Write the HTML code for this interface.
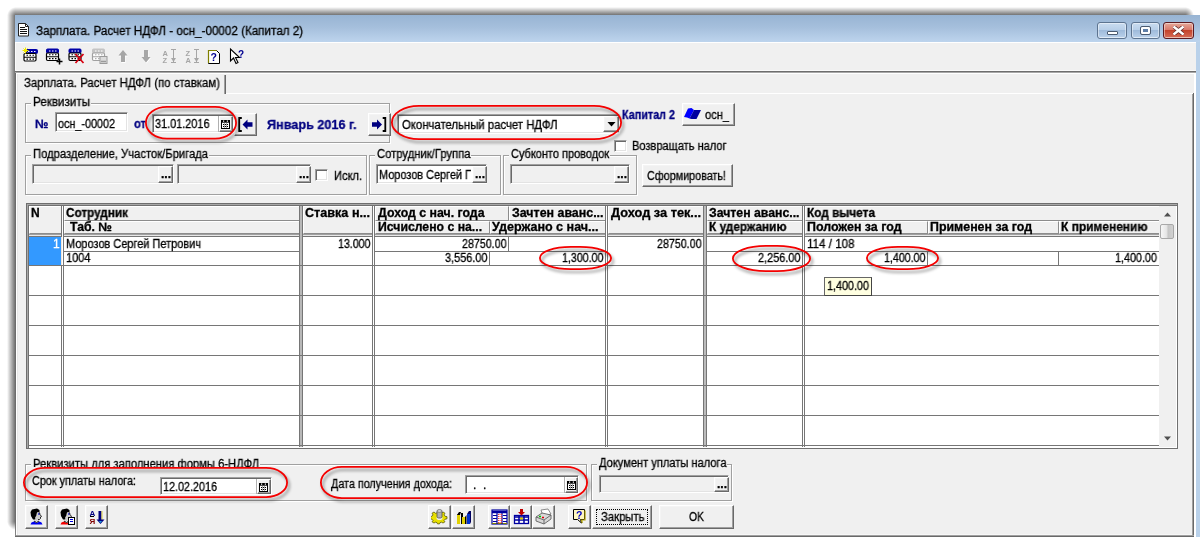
<!DOCTYPE html>
<html lang="ru"><head><meta charset="utf-8"><title>Зарплата. Расчет НДФЛ</title>
<style>
html,body{margin:0;padding:0}
body{width:1200px;height:537px;overflow:hidden;background:#fff;position:relative;font-family:"Liberation Sans", sans-serif;font-size:11px;color:#000}
div,span,svg{position:absolute}
svg{will-change:transform}
span{white-space:pre;line-height:1;transform-origin:0 0;will-change:transform;-webkit-text-stroke:0.3px}
</style></head>
<body>
<div style="left:7px;top:16px;width:9px;height:505px;background:linear-gradient(90deg,rgba(0,0,0,0),rgba(0,0,0,0.62))"></div>
<div style="left:16px;top:7px;width:1169px;height:9px;background:linear-gradient(180deg,rgba(0,0,0,0),rgba(0,0,0,0.62))"></div>
<div style="left:7px;top:7px;width:9px;height:9px;background:radial-gradient(circle at 100% 100%,rgba(0,0,0,0.62),rgba(0,0,0,0) 9px)"></div>
<div style="left:1185px;top:7px;width:9px;height:9px;background:radial-gradient(circle at 0 100%,rgba(0,0,0,0.62),rgba(0,0,0,0) 9px)"></div>
<div style="left:7px;top:521px;width:9px;height:9px;background:radial-gradient(circle at 100% 0,rgba(0,0,0,0.62),rgba(0,0,0,0) 9px)"></div>
<div style="left:15px;top:15px;width:1185px;height:522px;background:#f0f0f0"></div>
<div style="left:15px;top:15px;width:1185px;height:27px;background:linear-gradient(#98b4d3,#a5bfdc 45%,#bdd4ed)"></div>
<div style="left:1196px;top:42px;width:4px;height:495px;background:#b9d1ea"></div>
<div style="left:15px;top:42px;width:1181px;height:1px;background:#fff"></div>
<div style="left:15px;top:43px;width:1px;height:28px;background:#fbfbfb"></div>
<div style="left:15px;top:73px;width:1px;height:448px;background:#6c6c6c"></div>
<div style="left:15px;top:521px;width:1px;height:16px;background:linear-gradient(#6c6c6c,#8a8a8a)"></div>
<svg style="left:18px;top:23px" width="12" height="14" viewBox="0 0 12 14"><path d="M0.5 0.5h7l3 3v9.5h-10z" fill="#fff" stroke="#222" stroke-width="1"/><path d="M7.5 0.5v3h3" fill="none" stroke="#222" stroke-width="1"/><path d="M2 4.5h5M2 6.5h7M2 8.5h7M2 10.5h7" stroke="#111" stroke-width="1"/></svg>
<span id="t0" style="left:35.50px;top:25.19px;font-size:12px;color:#000;transform:scaleX(0.971);">Зарплата. Расчет НДФЛ - осн_-00002 (Капитал 2)</span>
<div style="left:1097px;top:22px;width:30px;height:17px;box-sizing:border-box;border:1px solid #5d7490;border-radius:3px;background:linear-gradient(#c9dcf0,#b8cfe8 45%,#9fbbdb 50%,#b5cde8 90%,#cfe0f3);box-shadow:inset 0 0 0 1px rgba(255,255,255,.45)"></div>
<div style="left:1131px;top:22px;width:29px;height:17px;box-sizing:border-box;border:1px solid #5d7490;border-radius:3px;background:linear-gradient(#c9dcf0,#b8cfe8 45%,#9fbbdb 50%,#b5cde8 90%,#cfe0f3);box-shadow:inset 0 0 0 1px rgba(255,255,255,.45)"></div>
<div style="left:1163px;top:22px;width:31px;height:17px;box-sizing:border-box;border:1px solid #5c1a20;border-radius:3px;background:linear-gradient(#e5a99a,#d9796a 45%,#c4432b 50%,#d2644f 90%,#e09a80);box-shadow:inset 0 0 0 1px rgba(255,255,255,.45)"></div>
<div style="left:1107px;top:31px;width:11px;height:4px;box-sizing:border-box;background:#fff;border:1px solid #4a5a70;border-radius:1px"></div>
<div style="left:1141px;top:27px;width:9px;height:7px;box-sizing:border-box;background:#5f7fa8;border:2px solid #fff;outline:1px solid #4a5a70;border-radius:1px"></div>
<svg style="left:1173px;top:26px" width="11" height="9" viewBox="0 0 13 11"><path d="M1.5 1.5l10 8M11.5 1.5l-10 8" stroke="#5a2a2a" stroke-width="4.800" stroke-linecap="square"/><path d="M1.500 1.500l10 8M11.500 1.500l-10 8" stroke="#fff" stroke-width="3" stroke-linecap="square"/></svg>
<div style="left:15px;top:70px;width:1181px;height:1px;background:#fafafa"></div>
<div style="left:15px;top:71px;width:1181px;height:1px;background:#6e6e6e"></div>
<div style="left:15px;top:72px;width:1181px;height:1px;background:#a8a8a8"></div>
<div style="left:16px;top:73px;width:1178px;height:1px;background:#fff"></div>
<svg style="left:21px;top:46px" width="20" height="20" viewBox="0 0 20 20"><rect x="4.5" y="3.5" width="12" height="4" rx="1" fill="#0000a8" stroke="#0000a8" stroke-width="1"/><rect x="3" y="7.5" width="12" height="7.500" rx="1.200" fill="#fff" stroke="#000" stroke-width="1.200"/><path d="M3 11.25h12" stroke="#000" stroke-width="1"/><path d="M7.0 5.5h1.500M10.0 5.5h1.500M13.0 5.5h1.500" stroke="#fff" stroke-width="1.100"/><path d="M5.5 9.3h1.500M8.5 9.3h1.500M11.5 9.3h1.500" stroke="#000" stroke-width="1.100"/><path d="M5.5 13.1h1.500M8.5 13.1h1.500M11.5 13.1h1.500" stroke="#000" stroke-width="1.100"/><path d="M4.500 1.500v6M1.500 4.500h6M2.500 2.500l4 4M6.500 2.500l-4 4" stroke="#f0e800" stroke-width="1"/></svg>
<svg style="left:44px;top:46px" width="20" height="20" viewBox="0 0 20 20"><rect x="2.5" y="3" width="12" height="4" rx="1" fill="#0000a8" stroke="#0000a8" stroke-width="1"/><rect x="2.5" y="7" width="12" height="7.500" rx="1.200" fill="#fff" stroke="#000" stroke-width="1.200"/><path d="M2.5 10.75h12" stroke="#000" stroke-width="1"/><path d="M5.0 5.0h1.500M8.0 5.0h1.500M11.0 5.0h1.500" stroke="#fff" stroke-width="1.100"/><path d="M5.0 8.8h1.500M8.0 8.8h1.500M11.0 8.8h1.500" stroke="#000" stroke-width="1.100"/><path d="M5.0 12.6h1.500M8.0 12.6h1.500M11.0 12.6h1.500" stroke="#000" stroke-width="1.100"/><path d="M15.500 12.500v6M12.500 15.500h6" stroke="#000" stroke-width="1.500"/></svg>
<svg style="left:67px;top:46px" width="20" height="20" viewBox="0 0 20 20"><rect x="2" y="3" width="12" height="4" rx="1" fill="#0000a8" stroke="#0000a8" stroke-width="1"/><rect x="2" y="7" width="12" height="7.500" rx="1.200" fill="#fff" stroke="#000" stroke-width="1.200"/><path d="M2 10.75h12" stroke="#000" stroke-width="1"/><path d="M4.5 5.0h1.500M7.5 5.0h1.500M10.5 5.0h1.500" stroke="#fff" stroke-width="1.100"/><path d="M4.5 8.8h1.500M7.5 8.8h1.500M10.5 8.8h1.500" stroke="#000" stroke-width="1.100"/><path d="M4.5 12.6h1.500M7.5 12.6h1.500M10.5 12.6h1.500" stroke="#000" stroke-width="1.100"/><path d="M8.500 8l8 9M16.500 8l-8 9" stroke="#d80010" stroke-width="1.700"/></svg>
<svg style="left:90px;top:46px" width="20" height="20" viewBox="0 0 20 20"><rect x="2.5" y="3" width="12" height="4" rx="1" fill="#c4c4c4" stroke="#c4c4c4" stroke-width="1"/><rect x="2.5" y="7" width="12" height="7.500" rx="1.200" fill="#fff" stroke="#a0a0a0" stroke-width="1.200"/><path d="M2.5 10.75h12" stroke="#a0a0a0" stroke-width="1"/><path d="M5.0 5.0h1.500M8.0 5.0h1.500M11.0 5.0h1.500" stroke="#fff" stroke-width="1.100"/><path d="M5.0 8.8h1.500M8.0 8.8h1.500M11.0 8.8h1.500" stroke="#b0b0b0" stroke-width="1.100"/><path d="M5.0 12.6h1.500M8.0 12.6h1.500M11.0 12.6h1.500" stroke="#b0b0b0" stroke-width="1.100"/><rect x="10" y="10.500" width="7" height="7" fill="#dcdcdc" stroke="#9a9a9a"/><path d="M11 15.500h5" stroke="#9a9a9a" stroke-width="1.500"/></svg>
<svg style="left:113px;top:46px" width="20" height="20" viewBox="0 0 20 20"><path d="M10.500 5l4.500 5.500h-2.500v6.500h-4v-6.500h-2.500z" fill="#fff"/><path d="M10 4l4.500 5.500h-2.500v6.500h-4v-6.500h-2.500z" fill="#a6a6a6"/></svg>
<svg style="left:136px;top:46px" width="20" height="20" viewBox="0 0 20 20"><path d="M10.500 17.500l4.500-5.500h-2.500v-7h-4v7h-2.500z" fill="#fff"/><path d="M10 16.500l4.500-5.500h-2.500v-7h-4v7h-2.500z" fill="#a6a6a6"/></svg>
<svg style="left:159px;top:46px" width="20" height="20" viewBox="0 0 20 20"><text x="3.500" y="9.500" font-size="7.500" font-weight="bold" font-family="Liberation Sans, sans-serif" fill="#a6a6a6">A</text><text x="3.500" y="17" font-size="7.500" font-weight="bold" font-family="Liberation Sans, sans-serif" fill="#a6a6a6">Z</text><path d="M14.500 3.500v13M12 3.500h5M12 16.500h5" stroke="#a6a6a6" fill="none"/><path d="M12 12h5l-2.500 4z" fill="#a6a6a6"/></svg>
<svg style="left:182px;top:46px" width="20" height="20" viewBox="0 0 20 20"><text x="3.500" y="9.500" font-size="7.500" font-weight="bold" font-family="Liberation Sans, sans-serif" fill="#a6a6a6">Z</text><text x="3.500" y="17" font-size="7.500" font-weight="bold" font-family="Liberation Sans, sans-serif" fill="#a6a6a6">A</text><path d="M14.500 3.500v13M12 3.500h5M12 16.500h5" stroke="#a6a6a6" fill="none"/><path d="M12 12h5l-2.500 4z" fill="#a6a6a6"/></svg>
<svg style="left:205px;top:46px" width="20" height="20" viewBox="0 0 20 20"><path d="M3.500 17.500v-13h8l3 3v10z" fill="#fff" stroke="#000"/><path d="M3.500 17v-12.500h8" fill="none" stroke="#808000" stroke-width="1.200"/><text x="5.500" y="15" font-size="10.500" font-weight="bold" font-family="Liberation Sans, sans-serif" fill="#000090">?</text></svg>
<svg style="left:228px;top:46px" width="20" height="20" viewBox="0 0 20 20"><path d="M2.500 3v12l3-3l2.500 5.500l2-1l-2.500-5h4z" fill="#fff" stroke="#000" stroke-width="1.100"/><text x="10" y="12" font-size="10" font-weight="bold" font-family="Liberation Sans, sans-serif" fill="#000090">?</text></svg>
<div style="left:226px;top:93px;width:967px;height:1px;background:#fff"></div>
<div style="left:16px;top:73px;width:1px;height:463px;background:#fff"></div>
<div style="left:17px;top:74px;width:1px;height:461px;background:#e6e6e6"></div>
<div style="left:1192px;top:94px;width:1px;height:442px;background:#a0a0a0"></div>
<div style="left:1193px;top:93px;width:1px;height:444px;background:#696969"></div>
<div style="left:1194px;top:73px;width:1px;height:464px;background:#fff"></div>
<div style="left:1195px;top:73px;width:1px;height:464px;background:#fff"></div>
<div style="left:18px;top:534px;width:1174px;height:1px;background:#f7f7f7"></div>
<div style="left:16px;top:535px;width:1178px;height:1px;background:#a0a0a0"></div>
<div style="left:15px;top:536px;width:1179px;height:1px;background:#696969"></div>
<div style="left:224px;top:75px;width:1px;height:19px;background:#a0a0a0"></div>
<div style="left:225px;top:75px;width:1px;height:19px;background:#696969"></div>
<span id="t1" style="left:23.50px;top:77.19px;font-size:12px;color:#000;transform:scaleX(0.949);">Зарплата. Расчет НДФЛ (по ставкам)</span>
<div style="left:25px;top:103px;width:365px;height:40px;box-sizing:border-box;border:1px solid #a0a0a0;box-shadow:1px 1px 0 #fff, inset 1px 1px 0 #fff"></div>
<div style="left:31px;top:97px;width:60px;height:12px;background:#f0f0f0"></div>
<span id="t2" style="left:32.50px;top:96.19px;font-size:12px;color:#000;transform:scaleX(0.969);">Реквизиты</span>
<span id="t3" style="left:34.50px;top:118.19px;font-size:12px;color:#000080;font-weight:bold;">№</span>
<div style="left:55px;top:112px;width:73px;height:20px;background:#fff;box-sizing:border-box;border:1px solid;border-color:#a0a0a0 #fff #fff #a0a0a0;box-shadow:inset 1px 1px 0 #696969, inset -1px -1px 0 #e3e3e3"></div>
<span id="t4" style="left:57.50px;top:117.69px;font-size:12px;color:#000;transform:scaleX(0.900);">осн_-00002</span>
<span id="t5" style="left:133.50px;top:118.19px;font-size:12px;color:#000080;font-weight:bold;transform:scaleX(0.929);">от</span>
<div style="left:152px;top:114px;width:82px;height:19px;background:#fff;box-sizing:border-box;border:1px solid;border-color:#a0a0a0 #fff #fff #a0a0a0;box-shadow:inset 1px 1px 0 #696969, inset -1px -1px 0 #e3e3e3"></div>
<div style="left:218px;top:116px;width:1px;height:16px;background:#b0b0b0"></div>
<div style="left:219px;top:116px;width:14px;height:16px;background:#f0f0f0;box-sizing:border-box;border:1px solid;border-color:#fff #696969 #696969 #fff;box-shadow:inset -1px -1px 0 #a0a0a0, inset 1px 1px 0 #f4f4f4"></div>
<svg style="left:221px;top:120px" width="9" height="9" viewBox="0 0 9 9"><rect x="0.500" y="0.500" width="8" height="8" fill="#fff" stroke="#000"/><path d="M0 1.500h9" stroke="#000" stroke-width="2.400"/><path d="M2 0.600h1.200v1.200h-1.200zM5.800 0.600h1.200v1.200h-1.200z" fill="#fff"/><path d="M2 4.500h1M4 4.500h1M6 4.500h1M2 6.500h1M4 6.500h1M6 6.500h1" stroke="#000" stroke-width="1"/><path d="M3.500 3v5M5.500 3v5" stroke="#777" stroke-width="0.600"/></svg>
<span id="t6" style="left:154.50px;top:117.69px;font-size:12px;color:#000;transform:scaleX(0.907);">31.01.2016</span>
<div style="left:234px;top:113px;width:23px;height:23px;background:#f0f0f0;box-sizing:border-box;border:1px solid;border-color:#fff #696969 #696969 #fff;box-shadow:inset -1px -1px 0 #a0a0a0, inset 1px 1px 0 #f4f4f4"></div>
<svg style="left:238px;top:117px" width="16" height="15" viewBox="0 0 16 15"><path d="M3.800 1h-2.600v13h2.600" fill="none" stroke="#000" stroke-width="1.800"/><path d="M4.500 7.500L9.500 2.500V5.200H14.500V9.800H9.500V12.500Z" fill="#000080"/></svg>
<span id="t7" style="left:266.50px;top:117.95px;font-size:13px;color:#000080;font-weight:bold;transform:scaleX(0.972);">Январь 2016 г.</span>
<div style="left:368px;top:113px;width:23px;height:23px;background:#f0f0f0;box-sizing:border-box;border:1px solid;border-color:#fff #696969 #696969 #fff;box-shadow:inset -1px -1px 0 #a0a0a0, inset 1px 1px 0 #f4f4f4"></div>
<svg style="left:370px;top:117px" width="17" height="15" viewBox="0 0 17 15"><path d="M12.700 1h2.600v13h-2.600" fill="none" stroke="#000" stroke-width="1.800"/><path d="M12 7.500L7 2.500V5.200H2V9.800H7V12.500Z" fill="#000080"/></svg>
<div style="left:397px;top:114px;width:223px;height:20px;background:#fff;box-sizing:border-box;border:1px solid;border-color:#a0a0a0 #fff #fff #a0a0a0;box-shadow:inset 1px 1px 0 #696969, inset -1px -1px 0 #e3e3e3"></div>
<div style="left:603px;top:116px;width:16px;height:16px;background:#f0f0f0;box-sizing:border-box;border:1px solid;border-color:#fff #696969 #696969 #fff;box-shadow:inset -1px -1px 0 #a0a0a0, inset 1px 1px 0 #f4f4f4"></div>
<svg style="left:607px;top:122px" width="9" height="5" viewBox="0 0 9 5"><path d="M0.500 0h8l-4 4.500z" fill="#000"/></svg>
<span id="t8" style="left:402.00px;top:118.69px;font-size:12px;color:#000;transform:scaleX(0.945);">Окончательный расчет НДФЛ</span>
<span id="t9" style="left:621.50px;top:108.69px;font-size:12px;color:#000080;font-weight:bold;transform:scaleX(0.899);">Капитал 2</span>
<div style="left:682px;top:103px;width:53px;height:23px;background:#f0f0f0;box-sizing:border-box;border:1px solid;border-color:#fff #696969 #696969 #fff;box-shadow:inset -1px -1px 0 #a0a0a0, inset 1px 1px 0 #f4f4f4"></div>
<svg style="left:683px;top:106px" width="19" height="14" viewBox="0 0 19 14"><path d="M1 11L5 2.500L8.500 2L11 4L6.500 12.500L4 11.500Z" fill="#0000ff"/><path d="M6.500 12.500L11 4L18 4L13.500 13L8.500 13Z" fill="#0000a0"/></svg>
<span id="t10" style="left:705.00px;top:108.69px;font-size:12px;color:#000;transform:scaleX(0.924);">осн_</span>
<div style="left:614px;top:140px;width:13px;height:12px;background:#fff;box-sizing:border-box;border:1px solid;border-color:#a0a0a0 #fff #fff #a0a0a0;box-shadow:inset 1px 1px 0 #696969, inset -1px -1px 0 #e3e3e3"></div>
<span id="t11" style="left:632.00px;top:140.19px;font-size:12px;color:#000;transform:scaleX(0.921);">Возвращать налог</span>
<div style="left:25px;top:155px;width:342px;height:40px;box-sizing:border-box;border:1px solid #a0a0a0;box-shadow:1px 1px 0 #fff, inset 1px 1px 0 #fff"></div>
<div style="left:31px;top:149px;width:178px;height:12px;background:#f0f0f0"></div>
<span id="t12" style="left:32.50px;top:148.19px;font-size:12px;color:#000;transform:scaleX(0.936);">Подразделение, Участок/Бригада</span>
<div style="left:32px;top:164px;width:142px;height:20px;background:#f0f0f0;box-sizing:border-box;border:1px solid;border-color:#a0a0a0 #fff #fff #a0a0a0;box-shadow:inset 1px 1px 0 #696969, inset -1px -1px 0 #e3e3e3"></div>
<div style="left:158px;top:166px;width:15px;height:17px;background:#f0f0f0;box-sizing:border-box;border:1px solid;border-color:#fff #696969 #696969 #fff;box-shadow:inset -1px -1px 0 #a0a0a0, inset 1px 1px 0 #f4f4f4"></div>
<span id="t13" style="left:161.00px;top:168.19px;font-size:12px;color:#000;font-weight:bold;">...</span>
<div style="left:177px;top:164px;width:134px;height:20px;background:#f0f0f0;box-sizing:border-box;border:1px solid;border-color:#a0a0a0 #fff #fff #a0a0a0;box-shadow:inset 1px 1px 0 #696969, inset -1px -1px 0 #e3e3e3"></div>
<div style="left:296px;top:166px;width:15px;height:17px;background:#f0f0f0;box-sizing:border-box;border:1px solid;border-color:#fff #696969 #696969 #fff;box-shadow:inset -1px -1px 0 #a0a0a0, inset 1px 1px 0 #f4f4f4"></div>
<span id="t14" style="left:299.00px;top:168.19px;font-size:12px;color:#000;font-weight:bold;">...</span>
<div style="left:315px;top:169px;width:13px;height:12px;background:#fff;box-sizing:border-box;border:1px solid;border-color:#a0a0a0 #fff #fff #a0a0a0;box-shadow:inset 1px 1px 0 #696969, inset -1px -1px 0 #e3e3e3"></div>
<span id="t15" style="left:333.50px;top:169.69px;font-size:12px;color:#000;transform:scaleX(0.922);">Искл.</span>
<div style="left:369px;top:155px;width:132px;height:40px;box-sizing:border-box;border:1px solid #a0a0a0;box-shadow:1px 1px 0 #fff, inset 1px 1px 0 #fff"></div>
<div style="left:375px;top:149px;width:96px;height:12px;background:#f0f0f0"></div>
<span id="t16" style="left:376.50px;top:148.19px;font-size:12px;color:#000;transform:scaleX(0.938);">Сотрудник/Группа</span>
<div style="left:376px;top:164px;width:111px;height:20px;background:#fff;box-sizing:border-box;border:1px solid;border-color:#a0a0a0 #fff #fff #a0a0a0;box-shadow:inset 1px 1px 0 #696969, inset -1px -1px 0 #e3e3e3"></div>
<div style="left:472px;top:166px;width:15px;height:17px;background:#f0f0f0;box-sizing:border-box;border:1px solid;border-color:#fff #696969 #696969 #fff;box-shadow:inset -1px -1px 0 #a0a0a0, inset 1px 1px 0 #f4f4f4"></div>
<span id="t17" style="left:475.00px;top:168.19px;font-size:12px;color:#000;font-weight:bold;">...</span>
<span id="t18" style="left:378.50px;top:168.69px;font-size:12px;color:#000;transform:scaleX(0.910);">Морозов Сергей Г</span>
<div style="left:503px;top:155px;width:134px;height:40px;box-sizing:border-box;border:1px solid #a0a0a0;box-shadow:1px 1px 0 #fff, inset 1px 1px 0 #fff"></div>
<div style="left:509px;top:149px;width:101px;height:12px;background:#f0f0f0"></div>
<span id="t19" style="left:510.50px;top:148.19px;font-size:12px;color:#000;transform:scaleX(0.915);">Субконто проводок</span>
<div style="left:510px;top:164px;width:120px;height:20px;background:#f0f0f0;box-sizing:border-box;border:1px solid;border-color:#a0a0a0 #fff #fff #a0a0a0;box-shadow:inset 1px 1px 0 #696969, inset -1px -1px 0 #e3e3e3"></div>
<div style="left:614px;top:166px;width:15px;height:17px;background:#f0f0f0;box-sizing:border-box;border:1px solid;border-color:#fff #696969 #696969 #fff;box-shadow:inset -1px -1px 0 #a0a0a0, inset 1px 1px 0 #f4f4f4"></div>
<span id="t20" style="left:617.00px;top:168.19px;font-size:12px;color:#000;font-weight:bold;">...</span>
<div style="left:642px;top:164px;width:91px;height:23px;background:#f0f0f0;box-sizing:border-box;border:1px solid;border-color:#fff #696969 #696969 #fff;box-shadow:inset -1px -1px 0 #a0a0a0, inset 1px 1px 0 #f4f4f4"></div>
<span id="t21" style="left:647.00px;top:170.19px;font-size:12px;color:#000;transform:scaleX(0.899);">Сформировать!</span>
<div style="left:26px;top:203px;width:1152px;height:246px;box-sizing:border-box;background:#fff;border:1px solid;border-color:#6e6e6e #707070 #707070 #6e6e6e;box-shadow:inset 1px 1px 0 #a8a8a8, inset 2px 2px 0 #707070"></div>
<div style="left:29px;top:206px;width:1130px;height:29px;background:#f0f0f0;overflow:hidden"></div>
<div style="left:29px;top:206px;width:33px;height:28px;box-sizing:border-box;border:1px solid;border-color:#fff #8c8c8c #8c8c8c #fff"></div>
<div style="left:64px;top:206px;width:236px;height:15px;box-sizing:border-box;border:1px solid;border-color:#fff #8c8c8c #8c8c8c #fff"></div>
<div style="left:64px;top:221px;width:236px;height:13px;box-sizing:border-box;border:1px solid;border-color:#fff #8c8c8c #8c8c8c #fff"></div>
<div style="left:303px;top:206px;width:70px;height:28px;box-sizing:border-box;border:1px solid;border-color:#fff #8c8c8c #8c8c8c #fff"></div>
<div style="left:375px;top:206px;width:134px;height:15px;box-sizing:border-box;border:1px solid;border-color:#fff #8c8c8c #8c8c8c #fff"></div>
<div style="left:509px;top:206px;width:97px;height:15px;box-sizing:border-box;border:1px solid;border-color:#fff #8c8c8c #8c8c8c #fff"></div>
<div style="left:375px;top:221px;width:115px;height:13px;box-sizing:border-box;border:1px solid;border-color:#fff #8c8c8c #8c8c8c #fff"></div>
<div style="left:490px;top:221px;width:116px;height:13px;box-sizing:border-box;border:1px solid;border-color:#fff #8c8c8c #8c8c8c #fff"></div>
<div style="left:608px;top:206px;width:96px;height:28px;box-sizing:border-box;border:1px solid;border-color:#fff #8c8c8c #8c8c8c #fff"></div>
<div style="left:707px;top:206px;width:96px;height:15px;box-sizing:border-box;border:1px solid;border-color:#fff #8c8c8c #8c8c8c #fff"></div>
<div style="left:707px;top:221px;width:96px;height:13px;box-sizing:border-box;border:1px solid;border-color:#fff #8c8c8c #8c8c8c #fff"></div>
<div style="left:805px;top:206px;width:356px;height:15px;box-sizing:border-box;border:1px solid;border-color:#fff #8c8c8c #8c8c8c #fff"></div>
<div style="left:805px;top:221px;width:123px;height:13px;box-sizing:border-box;border:1px solid;border-color:#fff #8c8c8c #8c8c8c #fff"></div>
<div style="left:928px;top:221px;width:131px;height:13px;box-sizing:border-box;border:1px solid;border-color:#fff #8c8c8c #8c8c8c #fff"></div>
<div style="left:1059px;top:221px;width:102px;height:13px;box-sizing:border-box;border:1px solid;border-color:#fff #8c8c8c #8c8c8c #fff"></div>
<div style="left:29px;top:234px;width:1130px;height:1px;background:#a0a0a0"></div>
<div style="left:29px;top:235px;width:1130px;height:1px;background:#e8e8e8"></div>
<div style="left:29px;top:236px;width:1130px;height:1px;background:#767676"></div>
<div style="left:1159px;top:206px;width:17px;height:241px;background:#f0f0f0"></div>
<svg style="left:1164px;top:212px" width="7" height="5" viewBox="0 0 7 5"><path d="M0 4.5h7l-3.500-4z" fill="#505050"/></svg>
<svg style="left:1164px;top:436px" width="7" height="5" viewBox="0 0 7 5"><path d="M0 0.5h7l-3.500 4z" fill="#505050"/></svg>
<div style="left:1160px;top:224px;width:14px;height:15px;box-sizing:border-box;border:1px solid #a8a8a8;border-radius:2px;background:linear-gradient(90deg,#f6f6f6,#e6e6e6 45%,#c6c6c6 60%,#d2d2d2)"></div>
<div style="left:62px;top:206px;width:1px;height:241px;background:#fff"></div>
<div style="left:61px;top:206px;width:1px;height:241px;background:#767676"></div>
<div style="left:63px;top:206px;width:1px;height:241px;background:#767676"></div>
<div style="left:300px;top:206px;width:2px;height:241px;background:#b8b8b8"></div>
<div style="left:299px;top:206px;width:1px;height:241px;background:#767676"></div>
<div style="left:302px;top:206px;width:1px;height:241px;background:#767676"></div>
<div style="left:373px;top:206px;width:1px;height:241px;background:#fff"></div>
<div style="left:372px;top:206px;width:1px;height:241px;background:#767676"></div>
<div style="left:374px;top:206px;width:1px;height:241px;background:#767676"></div>
<div style="left:606px;top:206px;width:1px;height:241px;background:#fff"></div>
<div style="left:605px;top:206px;width:1px;height:241px;background:#767676"></div>
<div style="left:607px;top:206px;width:1px;height:241px;background:#767676"></div>
<div style="left:704px;top:206px;width:2px;height:241px;background:#bcbcbc"></div>
<div style="left:703px;top:206px;width:1px;height:241px;background:#767676"></div>
<div style="left:706px;top:206px;width:1px;height:241px;background:#767676"></div>
<div style="left:803px;top:206px;width:1px;height:241px;background:#fff"></div>
<div style="left:802px;top:206px;width:1px;height:241px;background:#767676"></div>
<div style="left:804px;top:206px;width:1px;height:241px;background:#767676"></div>
<div style="left:29px;top:265px;width:1130px;height:1px;background:#767676"></div>
<div style="left:29px;top:295px;width:1130px;height:1px;background:#767676"></div>
<div style="left:29px;top:325px;width:1130px;height:1px;background:#767676"></div>
<div style="left:29px;top:355px;width:1130px;height:1px;background:#767676"></div>
<div style="left:29px;top:385px;width:1130px;height:1px;background:#767676"></div>
<div style="left:29px;top:415px;width:1130px;height:1px;background:#767676"></div>
<div style="left:29px;top:445px;width:1130px;height:1px;background:#767676"></div>
<div style="left:64px;top:251px;width:235px;height:1px;background:#767676"></div>
<div style="left:375px;top:251px;width:230px;height:1px;background:#767676"></div>
<div style="left:707px;top:251px;width:95px;height:1px;background:#767676"></div>
<div style="left:805px;top:251px;width:354px;height:1px;background:#767676"></div>
<div style="left:508px;top:237px;width:1px;height:14px;background:#767676"></div>
<div style="left:489px;top:251px;width:1px;height:14px;background:#767676"></div>
<div style="left:927px;top:251px;width:1px;height:14px;background:#767676"></div>
<div style="left:1058px;top:251px;width:1px;height:14px;background:#767676"></div>
<div style="left:29px;top:237px;width:32px;height:28px;background:#3399ff"></div>
<div style="left:61px;top:237px;width:1px;height:28px;background:#f0e4d8"></div>
<span id="t22" style="left:31.00px;top:207.19px;font-size:12px;color:#000;font-weight:bold;">N</span>
<span id="t23" style="left:65.50px;top:207.19px;font-size:12px;color:#000;font-weight:bold;transform:scaleX(0.978);">Сотрудник</span>
<span id="t24" style="left:70.00px;top:221.19px;font-size:12px;color:#000;font-weight:bold;transform:scaleX(1.020);">Таб. №</span>
<span id="t25" style="left:304.50px;top:207.19px;font-size:12px;color:#000;font-weight:bold;transform:scaleX(1.051);">Ставка н...</span>
<span id="t26" style="left:377.50px;top:207.19px;font-size:12px;color:#000;font-weight:bold;transform:scaleX(1.026);">Доход с нач. года</span>
<span id="t27" style="left:377.50px;top:221.19px;font-size:12px;color:#000;font-weight:bold;transform:scaleX(1.020);">Исчислено с на...</span>
<span id="t28" style="left:512.00px;top:207.19px;font-size:12px;color:#000;font-weight:bold;transform:scaleX(1.034);">Зачтен аванс...</span>
<span id="t29" style="left:491.50px;top:221.19px;font-size:12px;color:#000;font-weight:bold;transform:scaleX(1.044);">Удержано с нач...</span>
<span id="t30" style="left:610.50px;top:207.19px;font-size:12px;color:#000;font-weight:bold;transform:scaleX(1.064);">Доход за тек...</span>
<span id="t31" style="left:709.00px;top:207.19px;font-size:12px;color:#000;font-weight:bold;transform:scaleX(1.023);">Зачтен аванс...</span>
<span id="t32" style="left:709.00px;top:221.19px;font-size:12px;color:#000;font-weight:bold;transform:scaleX(0.985);">К удержанию</span>
<span id="t33" style="left:807.00px;top:207.19px;font-size:12px;color:#000;font-weight:bold;transform:scaleX(0.984);">Код вычета</span>
<span id="t34" style="left:807.00px;top:221.19px;font-size:12px;color:#000;font-weight:bold;transform:scaleX(1.035);">Положен за год</span>
<span id="t35" style="left:929.50px;top:221.19px;font-size:12px;color:#000;font-weight:bold;transform:scaleX(1.032);">Применен за год</span>
<span id="t36" style="left:1060.50px;top:221.19px;font-size:12px;color:#000;font-weight:bold;transform:scaleX(0.995);">К применению</span>
<span id="t37" style="left:53.00px;top:237.69px;font-size:12px;color:#fff;">1</span>
<span id="t38" style="left:65.50px;top:237.69px;font-size:12px;color:#000;transform:scaleX(0.914);">Морозов Сергей Петрович</span>
<span id="t39" style="left:65.50px;top:252.19px;font-size:12px;color:#000;transform:scaleX(0.917);">1004</span>
<span id="t40" style="left:337.50px;top:237.69px;font-size:12px;color:#000;transform:scaleX(0.885);">13.000</span>
<span id="t41" style="left:462.00px;top:237.69px;font-size:12px;color:#000;transform:scaleX(0.889);">28750.00</span>
<span id="t42" style="left:445.00px;top:252.19px;font-size:12px;color:#000;transform:scaleX(0.910);">3,556.00</span>
<span id="t43" style="left:562.00px;top:252.19px;font-size:12px;color:#000;transform:scaleX(0.888);">1,300.00</span>
<span id="t44" style="left:657.00px;top:237.69px;font-size:12px;color:#000;transform:scaleX(0.889);">28750.00</span>
<span id="t45" style="left:758.00px;top:252.19px;font-size:12px;color:#000;transform:scaleX(0.910);">2,256.00</span>
<span id="t46" style="left:807.00px;top:237.69px;font-size:12px;color:#000;transform:scaleX(0.966);">114 / 108</span>
<span id="t47" style="left:884.00px;top:252.19px;font-size:12px;color:#000;transform:scaleX(0.888);">1,400.00</span>
<span id="t48" style="left:1115.00px;top:252.19px;font-size:12px;color:#000;transform:scaleX(0.899);">1,400.00</span>
<div style="left:824px;top:277px;width:48px;height:19px;box-sizing:border-box;background:#ffffe1;border:1px solid #666;border-right-color:#444;border-bottom-color:#444"></div>
<span id="t49" style="left:826.50px;top:280.19px;font-size:12px;color:#000;transform:scaleX(0.899);">1,400.00</span>
<div style="left:25px;top:464px;width:562px;height:37px;box-sizing:border-box;border:1px solid #a0a0a0;box-shadow:1px 1px 0 #fff, inset 1px 1px 0 #fff"></div>
<div style="left:31px;top:458px;width:229px;height:9px;background:#f0f0f0"></div>
<div style="left:31px;top:455px;width:232px;height:12px;overflow:hidden">
<span id="t50" style="left:1.50px;top:3.19px;font-size:12px;color:#000;transform:scaleX(0.935);">Реквизиты для заполнения формы 6-НДФЛ</span>
</div>
<span id="t51" style="left:31.50px;top:475.19px;font-size:12px;color:#000;transform:scaleX(0.903);">Срок уплаты налога:</span>
<div style="left:160px;top:477px;width:112px;height:18px;background:#fff;box-sizing:border-box;border:1px solid;border-color:#a0a0a0 #fff #fff #a0a0a0;box-shadow:inset 1px 1px 0 #696969, inset -1px -1px 0 #e3e3e3"></div>
<div style="left:256px;top:479px;width:1px;height:15px;background:#b0b0b0"></div>
<div style="left:257px;top:479px;width:14px;height:15px;background:#f0f0f0;box-sizing:border-box;border:1px solid;border-color:#fff #696969 #696969 #fff;box-shadow:inset -1px -1px 0 #a0a0a0, inset 1px 1px 0 #f4f4f4"></div>
<svg style="left:259px;top:483px" width="9" height="9" viewBox="0 0 9 9"><rect x="0.500" y="0.500" width="8" height="8" fill="#fff" stroke="#000"/><path d="M0 1.500h9" stroke="#000" stroke-width="2.400"/><path d="M2 0.600h1.200v1.200h-1.200zM5.800 0.600h1.200v1.200h-1.200z" fill="#fff"/><path d="M2 4.500h1M4 4.500h1M6 4.500h1M2 6.500h1M4 6.500h1M6 6.500h1" stroke="#000" stroke-width="1"/><path d="M3.500 3v5M5.500 3v5" stroke="#777" stroke-width="0.600"/></svg>
<span id="t52" style="left:162.50px;top:481.19px;font-size:12px;color:#000;transform:scaleX(0.899);">12.02.2016</span>
<span id="t53" style="left:330.50px;top:478.19px;font-size:12px;color:#000;transform:scaleX(0.898);">Дата получения дохода:</span>
<div style="left:465px;top:475px;width:114px;height:19px;background:#fff;box-sizing:border-box;border:1px solid;border-color:#a0a0a0 #fff #fff #a0a0a0;box-shadow:inset 1px 1px 0 #696969, inset -1px -1px 0 #e3e3e3"></div>
<div style="left:564px;top:477px;width:1px;height:16px;background:#b0b0b0"></div>
<div style="left:565px;top:477px;width:13px;height:16px;background:#f0f0f0;box-sizing:border-box;border:1px solid;border-color:#fff #696969 #696969 #fff;box-shadow:inset -1px -1px 0 #a0a0a0, inset 1px 1px 0 #f4f4f4"></div>
<svg style="left:567px;top:481px" width="9" height="9" viewBox="0 0 9 9"><rect x="0.500" y="0.500" width="8" height="8" fill="#fff" stroke="#000"/><path d="M0 1.500h9" stroke="#000" stroke-width="2.400"/><path d="M2 0.600h1.200v1.200h-1.200zM5.800 0.600h1.200v1.200h-1.200z" fill="#fff"/><path d="M2 4.500h1M4 4.500h1M6 4.500h1M2 6.500h1M4 6.500h1M6 6.500h1" stroke="#000" stroke-width="1"/><path d="M3.500 3v5M5.500 3v5" stroke="#777" stroke-width="0.600"/></svg>
<span id="t54" style="left:473.00px;top:479.19px;font-size:12px;color:#000;">.</span>
<span id="t55" style="left:483.00px;top:479.19px;font-size:12px;color:#000;">.</span>
<div style="left:591px;top:464px;width:141px;height:37px;box-sizing:border-box;border:1px solid #a0a0a0;box-shadow:1px 1px 0 #fff, inset 1px 1px 0 #fff"></div>
<div style="left:597px;top:458px;width:130px;height:12px;background:#f0f0f0"></div>
<span id="t56" style="left:598.50px;top:457.19px;font-size:12px;color:#000;transform:scaleX(0.925);">Документ уплаты налога</span>
<div style="left:599px;top:475px;width:130px;height:18px;background:#f0f0f0;box-sizing:border-box;border:1px solid;border-color:#a0a0a0 #fff #fff #a0a0a0;box-shadow:inset 1px 1px 0 #696969, inset -1px -1px 0 #e3e3e3"></div>
<div style="left:714px;top:477px;width:15px;height:15px;background:#f0f0f0;box-sizing:border-box;border:1px solid;border-color:#fff #696969 #696969 #fff;box-shadow:inset -1px -1px 0 #a0a0a0, inset 1px 1px 0 #f4f4f4"></div>
<span id="t57" style="left:717.00px;top:478.19px;font-size:12px;color:#000;font-weight:bold;">...</span>
<div style="left:25px;top:505px;width:23px;height:24px;background:#f0f0f0;box-sizing:border-box;border:1px solid;border-color:#fff #696969 #696969 #fff;box-shadow:inset -1px -1px 0 #a0a0a0, inset 1px 1px 0 #f4f4f4"></div>
<div style="left:55px;top:505px;width:23px;height:24px;background:#f0f0f0;box-sizing:border-box;border:1px solid;border-color:#fff #696969 #696969 #fff;box-shadow:inset -1px -1px 0 #a0a0a0, inset 1px 1px 0 #f4f4f4"></div>
<div style="left:85px;top:505px;width:23px;height:24px;background:#f0f0f0;box-sizing:border-box;border:1px solid;border-color:#fff #696969 #696969 #fff;box-shadow:inset -1px -1px 0 #a0a0a0, inset 1px 1px 0 #f4f4f4"></div>
<svg style="left:29px;top:508px" width="16" height="17" viewBox="0 0 16 17"><path d="M3 1.500L8 0.500L10.500 2L10.500 4.500L8 4.500L7.500 8L6.500 9L6.500 11.500L4 11.500L2 8L1.500 4Z" fill="#000"/><path d="M8 4.500L10.500 4.500L11 6.500L12.500 8.500L11.500 9L11.500 10.500L10.500 11.500L9 11.500L8 13.500L6.500 13.500L6.500 9L7.500 8Z" fill="#d0d0d0"/><path d="M9.200 5.200h1.400v1.600h-1.400z" fill="#0000e0"/><path d="M10.500 4.500L11 6.500L12.500 8.500L11.500 9L11.500 10.500L10.500 11.500L9 11.500" fill="none" stroke="#000" stroke-width="0.800"/><path d="M1.500 16.500L2.500 14.500L5 13.500L7.500 15L10.500 13.500L12.500 14.500L13.500 16.500Z" fill="#0000f0"/><path d="M5 13L7.500 14.500L10 13" stroke="#000" stroke-width="0.900" fill="none"/></svg>
<svg style="left:59px;top:508px" width="17" height="17" viewBox="0 0 17 17"><path d="M3 1.500L8 0.500L10.500 2L10.500 4.500L8 4.500L7.500 8L6.500 9L6.500 11.500L4 11.500L2 8L1.500 4Z" fill="#000"/><path d="M8 4.500L10.500 4.500L11 6.500L12.500 8.500L11.500 9L11.500 10.500L10.500 11.500L9 11.500L8 13.500L6.500 13.500L6.500 9L7.500 8Z" fill="#d0d0d0"/><path d="M9.200 5.200h1.400v1.600h-1.400z" fill="#0000e0"/><path d="M10.500 4.500L11 6.500L12.500 8.500L11.500 9L11.500 10.500L10.500 11.500L9 11.500" fill="none" stroke="#000" stroke-width="0.800"/><path d="M1.500 16.500L2.500 14.500L5 13.500L7.500 15L10.500 13.500L12.500 14.500L13.500 16.500Z" fill="#f00000"/><path d="M5 13L7.500 14.500L10 13" stroke="#000" stroke-width="0.900" fill="none"/><rect x="9.500" y="9.500" width="6" height="7" fill="#fff" stroke="#000"/><path d="M11 11.500h3M11 13.500h3" stroke="#0000e0" stroke-width="1"/></svg>
<svg style="left:88px;top:508px" width="18" height="17" viewBox="0 0 18 17"><text x="1.500" y="7.500" font-size="8" font-weight="bold" font-family="Liberation Sans, sans-serif" fill="#000080">A</text><text x="1.500" y="16" font-size="8" font-weight="bold" font-family="Liberation Sans, sans-serif" fill="#800000">Я</text><path d="M2 8.500h4" stroke="#000" stroke-width="1"/><path d="M12 3v9" stroke="#000080" stroke-width="3"/><path d="M14 3v9" stroke="#e0d040" stroke-width="1"/><path d="M8.500 11.500h8l-4 4.500z" fill="#000080"/><path d="M11 13h3l-1.500 2z" fill="#20a0e0"/></svg>
<div style="left:428px;top:505px;width:23px;height:24px;background:#f0f0f0;box-sizing:border-box;border:1px solid;border-color:#fff #696969 #696969 #fff;box-shadow:inset -1px -1px 0 #a0a0a0, inset 1px 1px 0 #f4f4f4"></div>
<div style="left:452px;top:505px;width:23px;height:24px;background:#f0f0f0;box-sizing:border-box;border:1px solid;border-color:#fff #696969 #696969 #fff;box-shadow:inset -1px -1px 0 #a0a0a0, inset 1px 1px 0 #f4f4f4"></div>
<div style="left:488px;top:505px;width:22px;height:24px;background:#f0f0f0;box-sizing:border-box;border:1px solid;border-color:#fff #696969 #696969 #fff;box-shadow:inset -1px -1px 0 #a0a0a0, inset 1px 1px 0 #f4f4f4"></div>
<div style="left:510px;top:505px;width:22px;height:24px;background:#f0f0f0;box-sizing:border-box;border:1px solid;border-color:#fff #696969 #696969 #fff;box-shadow:inset -1px -1px 0 #a0a0a0, inset 1px 1px 0 #f4f4f4"></div>
<div style="left:532px;top:505px;width:23px;height:24px;background:#f0f0f0;box-sizing:border-box;border:1px solid;border-color:#fff #696969 #696969 #fff;box-shadow:inset -1px -1px 0 #a0a0a0, inset 1px 1px 0 #f4f4f4"></div>
<div style="left:568px;top:505px;width:23px;height:24px;background:#f0f0f0;box-sizing:border-box;border:1px solid;border-color:#fff #696969 #696969 #fff;box-shadow:inset -1px -1px 0 #a0a0a0, inset 1px 1px 0 #f4f4f4"></div>
<svg style="left:431px;top:508px" width="18" height="18" viewBox="0 0 18 18"><path d="M9 4.500l1.500 0.500l1.500-1.500l2 1.500l-1 2l1 1.500l2 0.500v2.500l-2 0.500l-1 1.500l1 1.500l-2 1.500l-1.500-1l-1.500 0.500l-0.500 1.500h-2l-0.500-1.500l-1.500-0.500l-1.500 1l-2-1.500l1-1.500l-1-1.500l-2-0.500v-2.500l2-0.500l1-1.500l-1-2l2-1.500l1.500 1.500l1.500-0.500z" fill="#e8e000" stroke="#505000" stroke-width="0.800" transform="translate(0,1) scale(1,0.850)"/><ellipse cx="8.500" cy="10" rx="3" ry="2" fill="#f0f0f0"/><rect x="6" y="2" width="5" height="8" rx="1.500" fill="#b0b0b0" stroke="#505050" stroke-width="0.800"/><ellipse cx="8.500" cy="3" rx="2.500" ry="1.200" fill="#e8e8e8" stroke="#505050" stroke-width="0.600"/></svg>
<svg style="left:455px;top:508px" width="18" height="18" viewBox="0 0 18 18"><path d="M2 16v-9l3-3v12z" fill="#000"/><rect x="2" y="7" width="3" height="9" fill="#e0d000"/><path d="M2 7l2-3h2l-1 3z" fill="#000"/><rect x="7" y="9" width="3" height="7" fill="#e0d000"/><path d="M6 16v-11h2v4h-1v7z" fill="#000"/><path d="M10 9l1.500-2v9h-1.500z" fill="#000"/><rect x="12" y="6" width="3" height="10" fill="#0030d0"/><path d="M12 6l2-3h2l-1 3zM15 6l1-3v11l-1 2z" fill="#000060"/></svg>
<svg style="left:491px;top:508px" width="17" height="18" viewBox="0 0 17 18"><rect x="1" y="2" width="15" height="14" fill="#fff" stroke="#0000a0" stroke-width="1.200"/><path d="M1 4h15" stroke="#0000a0" stroke-width="2.500"/><path d="M1 15.500h15" stroke="#808000" stroke-width="1"/><path d="M6 3v13M11 3v13" stroke="#0000a0" stroke-width="1.200"/><path d="M2 7.500h4M2 10.500h4M2 13.500h4M12 7.500h4M12 10.500h4M12 13.500h4" stroke="#0000a0" stroke-width="1"/><path d="M7 6.500h4M7 8.500h4M7 10.500h4M7 12.500h4M7 14.500h4" stroke="#f04040" stroke-width="1" stroke-dasharray="1.500 1"/></svg>
<svg style="left:513px;top:508px" width="17" height="18" viewBox="0 0 17 18"><rect x="1.500" y="7.500" width="14" height="8" fill="#fff" stroke="#0000a0" stroke-width="1.300"/><path d="M1 9h15M1 12h15M6 8v8M11 8v8" stroke="#0000a0" stroke-width="1.500"/><path d="M7 1h3v3h2l-3.500 3.500l-3.500-3.500h2z" fill="#c00000"/><rect x="7" y="9.500" width="3" height="2" fill="#e0d000"/></svg>
<svg style="left:535px;top:508px" width="18" height="18" viewBox="0 0 18 18"><path d="M6 2l7-1l3 5l-8 2z" fill="#fff" stroke="#707070" stroke-width="0.800"/><path d="M1 9l6-4l9 2v4l-7 5l-8-3z" fill="#d8d8d8" stroke="#606060" stroke-width="0.900"/><path d="M1 9l8 3l7-5" fill="none" stroke="#606060" stroke-width="0.900"/><path d="M9 12v4" stroke="#606060" stroke-width="0.900"/><path d="M4 8.500h2" stroke="#00c000" stroke-width="1.300"/><path d="M7 9.500h2" stroke="#e00000" stroke-width="1.300"/></svg>
<svg style="left:572px;top:508px" width="16" height="18" viewBox="0 0 16 18"><path d="M1.500 1.500h11v10h-4l1 3.500l-4-3.500h-4z" fill="#fff8c0" stroke="#000" stroke-width="1"/><path d="M13 2.500v9.500h-3.500l0.800 3" fill="none" stroke="#b0a000" stroke-width="1.200"/><text x="4" y="11" font-size="10.500" font-weight="bold" font-family="Liberation Sans, sans-serif" fill="#0000c0">?</text></svg>
<div style="left:592px;top:505px;width:60px;height:24px;background:#f0f0f0;box-sizing:border-box;border:1px solid;border-color:#fff #696969 #696969 #fff;box-shadow:inset -1px -1px 0 #a0a0a0, inset 1px 1px 0 #f4f4f4"></div>
<div style="left:596px;top:509px;width:52px;height:16px;box-sizing:border-box;border:1px dotted #000"></div>
<span id="t58" style="left:600.50px;top:510.69px;font-size:12px;color:#000;transform:scaleX(0.941);">Закрыть</span>
<div style="left:659px;top:505px;width:75px;height:24px;background:#f0f0f0;box-sizing:border-box;border:1px solid;border-color:#fff #696969 #696969 #fff;box-shadow:inset -1px -1px 0 #a0a0a0, inset 1px 1px 0 #f4f4f4"></div>
<span id="t59" style="left:689.00px;top:510.69px;font-size:12px;color:#000;transform:scaleX(0.865);">OK</span>
<svg style="left:143px;top:103.5px;filter:drop-shadow(2px 3px 1.600px rgba(0,0,0,.42))" width="96" height="37.5" viewBox="0 0 96 37.5"><rect x="2.900" y="2.900" width="90.2" height="31.7" rx="21" ry="15.85" fill="none" stroke="#f40000" stroke-width="1.800"/></svg>
<svg style="left:389px;top:103px;filter:drop-shadow(2px 3px 1.600px rgba(0,0,0,.42))" width="235" height="39" viewBox="0 0 235 39"><rect x="2.900" y="2.900" width="229.2" height="33.2" rx="27" ry="16.60" fill="none" stroke="#f40000" stroke-width="1.800"/></svg>
<svg style="left:537px;top:244px;filter:drop-shadow(2px 3px 1.600px rgba(0,0,0,.42))" width="77" height="28" viewBox="0 0 77 28"><rect x="2.900" y="2.900" width="71.2" height="22.2" rx="31" ry="11.10" fill="none" stroke="#f40000" stroke-width="1.800"/></svg>
<svg style="left:730px;top:243px;filter:drop-shadow(2px 3px 1.600px rgba(0,0,0,.42))" width="83" height="31" viewBox="0 0 83 31"><rect x="2.900" y="2.900" width="77.2" height="25.2" rx="33" ry="12.60" fill="none" stroke="#f40000" stroke-width="1.800"/></svg>
<svg style="left:864px;top:244px;filter:drop-shadow(2px 3px 1.600px rgba(0,0,0,.42))" width="77" height="28" viewBox="0 0 77 28"><rect x="2.900" y="2.900" width="71.2" height="22.2" rx="31" ry="11.10" fill="none" stroke="#f40000" stroke-width="1.800"/></svg>
<svg style="left:21px;top:465px;filter:drop-shadow(2px 3px 1.600px rgba(0,0,0,.42))" width="269" height="35" viewBox="0 0 269 35"><rect x="2.900" y="2.900" width="263.2" height="29.2" rx="21" ry="14.60" fill="none" stroke="#f40000" stroke-width="1.800"/></svg>
<svg style="left:318px;top:464px;filter:drop-shadow(2px 3px 1.600px rgba(0,0,0,.42))" width="272" height="37" viewBox="0 0 272 37"><rect x="2.900" y="2.900" width="266.2" height="31.2" rx="21" ry="15.60" fill="none" stroke="#f40000" stroke-width="1.800"/></svg>
</body></html>
